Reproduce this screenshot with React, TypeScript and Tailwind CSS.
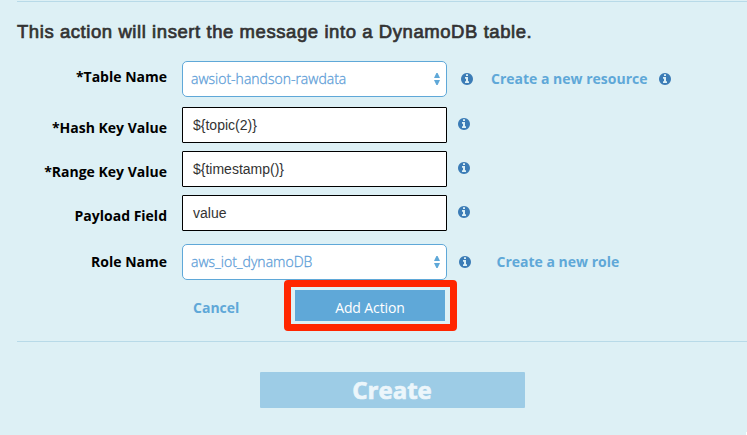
import type { ReactNode } from "react";

function Info({ className = "" }: { className?: string }) {
  return (
    <svg className={`size-3 shrink-0 fill-[#3b7cb6] ${className}`} viewBox="0 128 1536 1536">
      <path d="M1024 1376v-160q0-14-9-23t-23-9h-96v-512q0-14-9-23t-23-9h-320q-14 0-23 9t-9 23v160q0 14 9 23t23 9h96v320h-96q-14 0-23 9t-9 23v160q0 14 9 23t23 9h448q14 0 23-9t9-23zm-128-896v-160q0-14-9-23t-23-9h-192q-14 0-23 9t-9 23v160q0 14 9 23t23 9h192q14 0 23-9t9-23zm640 416q0 209-103 385.5t-279.5 279.5-385.5 103-385.5-103-279.5-279.5-103-385.5 103-385.5 279.5-279.5 385.5-103 385.5 103 279.5 279.5 103 385.5z" />
    </svg>
  );
}

function Row({ label, labelClass = "", className = "", children }: { label: string; labelClass?: string; className?: string; children: ReactNode }) {
  return (
    <div className={`flex h-9 items-center ${className}`}>
      <div className={`w-[167px] shrink-0 text-right text-[14px] leading-5 font-bold text-black ${labelClass}`}>{label}</div>
      {children}
    </div>
  );
}

function SelectBox({ value }: { value: string }) {
  return (
    <div className="ml-[15px] flex h-9 w-[265px] shrink-0 items-center justify-between rounded-[5px] border border-[#5fa8d8] bg-white pr-[6px] pl-2 text-[14px] leading-5 font-light text-[#5fa0d8]">
      <span className="[-webkit-text-stroke:0.3px_#5fa0d8]">{value}</span>
      <svg className="h-3 w-[6px] fill-[#5fa8d8]" viewBox="0 0 6 12">
        <path d="M2.4 0H3.6L6 5H0ZM0 7H6L3.6 12H2.4Z" />
      </svg>
    </div>
  );
}

function InputBox({ value }: { value: string }) {
  return (
    <div className="ml-[15px] flex h-9 w-[265px] shrink-0 items-center rounded-[1px] border border-black bg-white px-[10px] font-['Liberation_Sans',sans-serif] text-[14px] leading-5 text-[#333]">
      {value}
    </div>
  );
}

export default function App() {
  return (
    <div className="h-[435px] w-[747px] overflow-hidden bg-[#ddf0f5] font-['Open_Sans',sans-serif]">
      <div className="ml-[17px] pt-px">
        <div className="h-px bg-[#b8dae8]" />
      </div>
      <h1 className="mt-[18px] ml-[17px] h-6 font-['Liberation_Sans',sans-serif] text-[18.5px] leading-6 tracking-[0.57px] whitespace-nowrap text-[#333] [-webkit-text-stroke:0.7px_#333]">
        This action will insert the message into a DynamoDB table.
      </h1>

      <Row label="*Table Name" className="mt-[17px]" labelClass="-mt-1">
        <SelectBox value="awsiot-handson-rawdata" />
        <Info className="ml-[14px]" />
        <span className="ml-[18px] w-[156px] text-[14px] leading-5 font-bold whitespace-nowrap text-[#5fa8d8]">Create a new resource</span>
        <Info className="ml-3" />
      </Row>
      <Row label="*Hash Key Value" className="mt-[10px]" labelClass="mt-[6px]">
        <InputBox value="${topic(2)}" />
        <Info className="-mt-[2px] ml-[11px]" />
      </Row>
      <Row label="*Range Key Value" className="mt-2" labelClass="mt-[6px]">
        <InputBox value="${timestamp()}" />
        <Info className="-mt-[2px] ml-[11px]" />
      </Row>
      <Row label="Payload Field" className="mt-2" labelClass="mt-[6px]">
        <InputBox value="value" />
        <Info className="-mt-[2px] ml-[11px]" />
      </Row>
      <Row label="Role Name" className="mt-[13px]">
        <SelectBox value="aws_iot_dynamoDB" />
        <Info className="ml-3" />
        <span className="ml-[25.5px] text-[14px] leading-5 font-bold text-[#5fa8d8]">Create a new role</span>
      </Row>

      <div className="flex h-[51px] items-center">
        <div className="ml-[193px] w-[91px] pt-[5px] text-[14px] leading-5 font-bold text-[#5fa8d8]">Cancel</div>
        <div className="h-[51px] w-[173px] rounded-[4px] border-[7px] border-[#ff2600] px-1 pt-[3px]">
          <div className="flex h-[31px] w-[150px] items-center justify-center bg-[#5fa8d8] pt-1 text-[14px] leading-5 tracking-[-0.1px] text-white">Add Action</div>
        </div>
      </div>
      <div className="mt-[10px] ml-[17px] h-px bg-[#b8dae8]" />
      <div className="mt-[30px] ml-[260px] flex h-9 w-[265px] items-center justify-center rounded-[1px] bg-[#9dcce6] pr-px text-[24px] leading-9 font-bold text-[#ecf6fb] [-webkit-text-stroke:0.7px_#ecf6fb]">
        Create
      </div>
      <div className="mt-[24px] ml-[746px] h-[3px] w-px bg-white" />
    </div>
  );
}
